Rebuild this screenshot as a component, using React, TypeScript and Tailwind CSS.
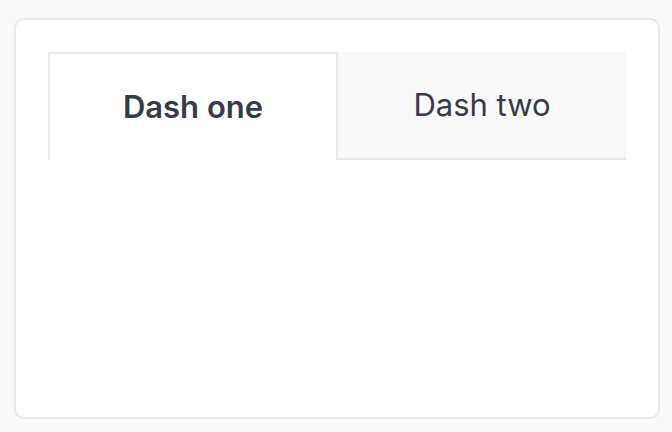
import { useState } from 'react';

const tabs = ['Dash one', 'Dash two'];

const App = () => {
  const [active, setActive] = useState(0);

  return (
    <div className="h-[432px] w-[672px] bg-[#f9f9f9] pl-[14px] pr-[12px] pt-[18px] font-['Inter','Liberation_Sans',sans-serif]">
      <div className="h-[401px] rounded-[10px] border-2 border-[#e8e8ee] bg-white p-8">
        <div className="flex h-[108px]">
          {tabs.map((label, i) =>
            i === active ? (
              <button
                key={label}
                type="button"
                onClick={() => setActive(i)}
                className="flex w-[290px] items-center justify-center border-2 border-b-0 border-[#e8e8ee] bg-white text-[31px] font-semibold text-[#373b45]"
              >
                {label}
              </button>
            ) : (
              <button
                key={label}
                type="button"
                onClick={() => setActive(i)}
                className="flex flex-1 items-center justify-center border-b-2 border-[#e8e8ee] bg-[#f9f9fa] text-[31px] text-[#373b45]"
              >
                {label}
              </button>
            ),
          )}
        </div>
      </div>
    </div>
  );
};

export default App;
